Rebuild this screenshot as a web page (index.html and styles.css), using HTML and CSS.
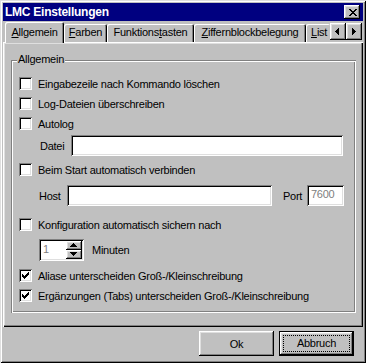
FILE: index.html
```html
<!DOCTYPE html>
<html lang="de">
<head>
	<meta charset="UTF-8">
	<title>LMC Einstellungen</title>
	<link rel="stylesheet" href="styles.css">
</head>
<body>

	<div class="window">

		<header class="titlebar">
			<span class="title">LMC Einstellungen</span>
			<span class="raised close">
				<svg width="8" height="7" viewBox="0 0 8 7"><path d="M0 0h2v1h-2z M6 0h2v1h-2z M1 1h2v1h-2z M5 1h2v1h-2z M2 2h4v1h-4z M3 3h2v1h-2z M2 4h4v1h-4z M1 5h2v1h-2z M5 5h2v1h-2z M0 6h2v1h-2z M6 6h2v1h-2z"/></svg>
			</span>
		</header>

		<nav class="tabstrip">
			<div class="tab active" style="width:59px"><u>A</u>llgemein</div>
			<div class="tab" style="width:43px"><u>F</u>arben</div>
			<div class="tab" style="width:87px">Funktions<u>t</u>asten</div>
			<div class="tab" style="width:112px"><u>Z</u>iffernblockbelegung</div>
			<div class="tab clipped" style="width:24px"><u>L</u>ist</div>
			<div class="scroller">
				<span class="raised arrow">
					<svg width="4" height="7" viewBox="0 0 4 7"><path d="M3 0h1v7h-1z M2 1h1v5h-1z M1 2h1v3h-1z M0 3h1v1h-1z"/></svg>
				</span>
				<span class="raised arrow right">
					<svg width="4" height="7" viewBox="0 0 4 7"><path d="M0 0h1v7h-1z M1 1h1v5h-1z M2 2h1v3h-1z M3 3h1v1h-1z"/></svg>
				</span>
			</div>
		</nav>

		<section class="panel">
			<div class="group">
				<span class="legend">Allgemein</span>

				<label class="row check">
					<span class="box"></span>Eingabezeile nach Kommando löschen
				</label>
				<label class="row check">
					<span class="box"></span>Log-Dateien überschreiben
				</label>
				<label class="row check">
					<span class="box"></span>Autolog
				</label>
				<div class="row field datei">
					<span class="lbl" style="width:32px">Datei</span>
					<span class="sunken input" style="width:272px"></span>
				</div>
				<label class="row check start">
					<span class="box"></span>Beim Start automatisch verbinden
				</label>
				<div class="row field host">
					<span class="lbl" style="width:28px">Host</span>
					<span class="sunken input" style="width:205px"></span>
					<span class="lbl port" style="width:24px">Port</span>
					<span class="sunken input dim" style="width:37px">7600</span>
				</div>
				<label class="row check konf">
					<span class="box"></span>Konfiguration automatisch sichern nach
				</label>
				<div class="row field spinrow">
					<span class="sunken spin">
						<span class="value">1</span>
						<span class="spinbtns">
							<span class="raised sbtn">
								<svg width="7" height="4" viewBox="0 0 7 4"><path d="M3 0h1v1h-1z M2 1h3v1h-3z M1 2h5v1h-5z M0 3h7v1h-7z"/></svg>
							</span>
							<span class="raised sbtn">
								<svg width="7" height="4" viewBox="0 0 7 4"><path d="M0 0h7v1h-7z M1 1h5v1h-5z M2 2h3v1h-3z M3 3h1v1h-1z"/></svg>
							</span>
						</span>
					</span>
					<span class="minuten">Minuten</span>
				</div>
				<label class="row check aliase">
					<span class="box checked"><svg width="7" height="7" viewBox="0 0 7 7"><path d="M6 0h1v1h-1z M5 1h2v1h-2z M0 2h1v1h-1z M4 2h3v1h-3z M0 3h2v1h-2z M3 3h3v1h-3z M0 4h5v1h-5z M1 5h3v1h-3z M2 6h1v1h-1z"/></svg></span>Aliase unterscheiden Groß-/Kleinschreibung
				</label>
				<label class="row check">
					<span class="box checked"><svg width="7" height="7" viewBox="0 0 7 7"><path d="M6 0h1v1h-1z M5 1h2v1h-2z M0 2h1v1h-1z M4 2h3v1h-3z M0 3h2v1h-2z M3 3h3v1h-3z M0 4h5v1h-5z M1 5h3v1h-3z M2 6h1v1h-1z"/></svg></span>Ergänzungen (Tabs) unterscheiden Groß-/Kleinschreibung
				</label>
			</div>
		</section>

		<footer class="actions">
			<button class="raised push">Ok</button>
			<button class="raised push default"><span class="focus">Abbruch</span></button>
		</footer>

	</div>

</body>
</html>
```

FILE: styles.css
```css
*{
	box-sizing: border-box;
}

body{
	margin: 0;
	background-color: #c0c0c0;
	font-family: "Liberation Sans", Arial, sans-serif;
	font-size: 11px;
	letter-spacing: -0.25px;
	color: #000;
}

svg{
	display: block;
	fill: #000;
	shape-rendering: crispEdges;
}

/* 3d edges */
.raised{
	background-color: #c0c0c0;
	box-shadow: inset -1px -1px #000, inset 1px 1px #fff, inset -2px -2px #808080, inset 2px 2px #dfdfdf;
}

.sunken{
	background-color: #fff;
	box-shadow: inset 1px 1px #808080, inset -1px -1px #fff, inset 2px 2px #000, inset -2px -2px #dfdfdf;
}

.window{
	width: 366px;
	height: 363px;
	padding: 3px;
	background-color: #c0c0c0;
	box-shadow: inset 1px 1px #dfdfdf, inset -1px -1px #000, inset 2px 2px #fff, inset -2px -2px #808080;
	display: flex;
	flex-direction: column;
}

.titlebar{
	height: 18px;
	flex: none;
	background-color: #000080;
	color: #fff;
	display: flex;
	align-items: center;
	justify-content: space-between;
	padding: 0 3px 0 2px;
}

.titlebar .title{
	font-weight: bold;
	font-size: 12px;
	letter-spacing: -0.25px;
}

.titlebar .close{
	width: 16px;
	height: 14px;
	padding: 4px 0 0 5px;
}

/* tabs */
.tabstrip{
	height: 21px;
	flex: none;
	display: flex;
	align-items: flex-start;
	padding-left: 2px;
}

.tab{
	margin-top: 3px;
	height: 18px;
	padding-top: 2px;
	line-height: 13px;
	text-align: center;
	white-space: nowrap;
	border-radius: 2px 2px 0 0;
	box-shadow: inset 1px 1px #fff, inset -1px 0 #000, inset -2px 0 #808080;
}

.tab.active{
	margin-top: 1px;
	height: 21px;
	padding-top: 4px;
	position: relative;
	z-index: 1;
	background-color: #c0c0c0;
}

.tab.clipped{
	text-align: left;
	padding-left: 5px;
	box-shadow: inset 1px 1px #fff;
}

.scroller{
	display: flex;
	margin-top: 2px;
}

.scroller .arrow{
	width: 16px;
	height: 17px;
	padding: 5px 0 0 5px;
}

.scroller .arrow.right{
	padding-left: 6px;
}

/* panel */
.panel{
	height: 285px;
	flex: none;
	padding: 18px 7px 14px 8px;
	box-shadow: inset 1px 1px #fff, inset -1px -1px #000, inset -2px -2px #808080, inset 2px 2px #dfdfdf;
}

.group{
	position: relative;
	height: 100%;
	padding: 14px 0 0 8px;
	box-shadow: inset 1px 1px #808080, inset -1px -1px #fff, inset 2px 2px #fff, inset -2px -2px #808080;
}

.group .legend{
	position: absolute;
	top: -7px;
	left: 6px;
	padding: 0 1px;
	line-height: 13px;
	background-color: #c0c0c0;
}

.row{
	display: flex;
	align-items: center;
	margin-top: 1px;
	white-space: nowrap;
}

.row:first-of-type{
	margin-top: 0;
}

.row.check{
	height: 19px;
}

.row .box{
	width: 13px;
	height: 13px;
	margin-right: 6px;
	flex: none;
	padding: 3px;
	background-color: #fff;
	box-shadow: inset 1px 1px #808080, inset -1px -1px #fff, inset 2px 2px #000, inset -2px -2px #dfdfdf;
}

.row.field{
	height: 21px;
	padding-left: 20px;
}

.row.datei{
	margin-top: 2px;
}

.row.datei .lbl{
	padding-left: 1px;
}

.row.start{
	margin-top: 4px;
}

.row.host{
	margin-top: 6px;
}

.row .port{
	margin-left: 11px;
}

.row .input{
	height: 21px;
	padding: 3px 0 0 4px;
	line-height: 13px;
}

.row .input.dim{
	color: #808080;
}

.row.konf{
	margin-top: 9px;
}

.row.spinrow{
	height: 22px;
	margin-top: 5px;
}

.spin{
	width: 45px;
	height: 22px;
	padding: 2px;
	display: flex;
}

.spin .value{
	flex: 1;
	color: #808080;
	padding: 2px 0 0 2px;
	line-height: 13px;
}

.spin .spinbtns{
	width: 16px;
	display: flex;
	flex-direction: column;
}

.spin .sbtn{
	height: 9px;
	padding: 2px 0 0 4px;
}

.minuten{
	margin-left: 8px;
}

.row.aliase{
	margin-top: 5px;
}

/* buttons */
.actions{
	flex: 1;
	display: flex;
	justify-content: flex-end;
	align-items: flex-start;
	gap: 5px;
	padding: 4px 9px 0 0;
}

.push{
	width: 75px;
	height: 25px;
	border: 0;
	margin: 0;
	padding: 0;
	font: inherit;
	letter-spacing: inherit;
	color: #000;
}

.push.default{
	border: 1px solid #000;
	padding: 3px;
}

.push .focus{
	display: block;
	height: 100%;
	border: 1px dotted #000;
	line-height: 14px;
}
```
